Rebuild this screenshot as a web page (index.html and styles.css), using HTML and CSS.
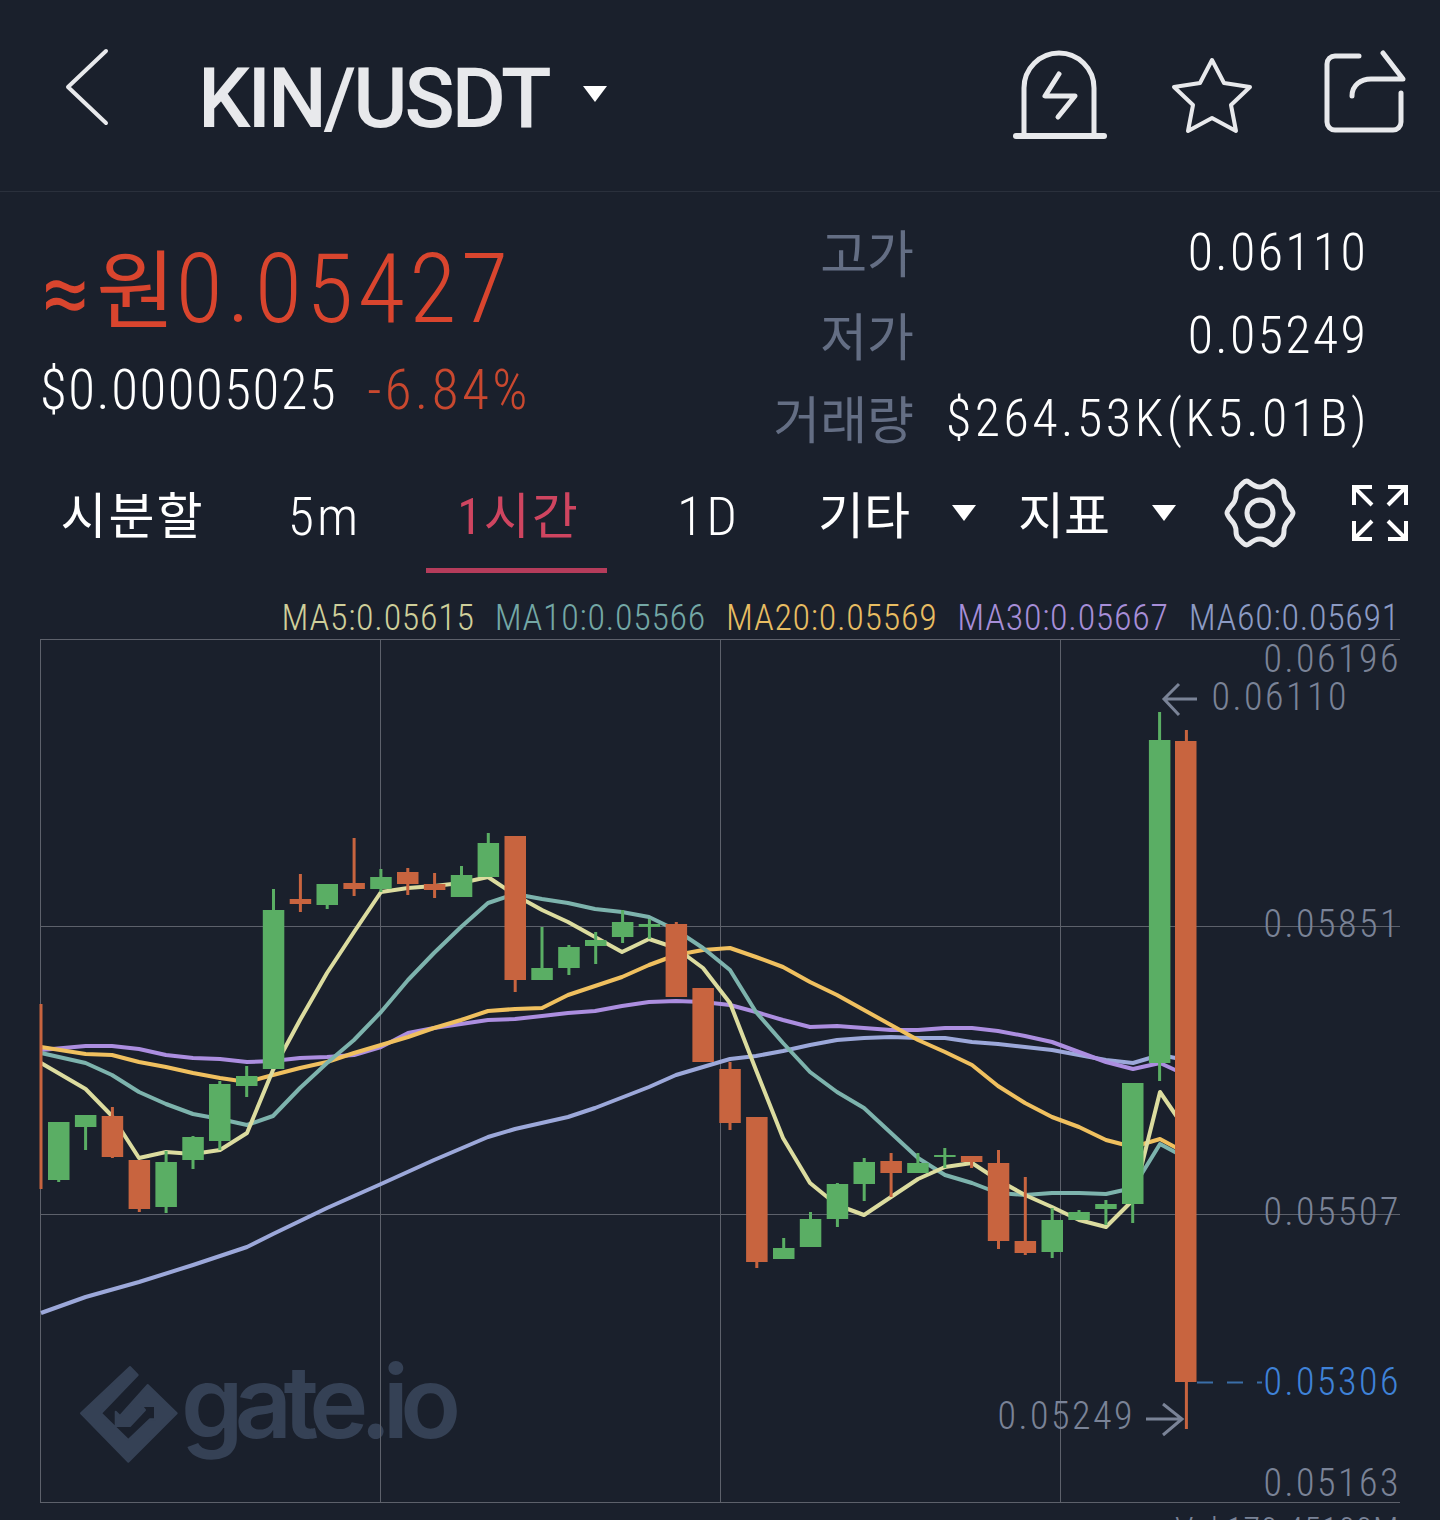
FILE: index.html
```html
<!DOCTYPE html>
<html lang="ko">
<head>
  <meta charset="UTF-8">
  <title>KIN/USDT</title>
  <link rel="stylesheet" href="styles.css">
</head>
<body>
  <header class="topbar">
    <svg class="back-icon" width="44" height="78" viewBox="0 0 44 78"><path d="M41 3L3 39L41 75"/></svg>
    <h1 class="pair">KIN/USDT</h1>
    <span class="caret pair-caret"></span>
    <div class="topbar-actions">
      <svg class="icon" width="94" height="90" viewBox="1013 49 94 90">
        <path d="M1024 133V87a35 35 0 0 1 70 0V133"/>
        <path class="thick" d="M1016 135H1104"/>
        <path d="M1059 73L1045 95H1075L1058 116"/>
      </svg>
      <svg class="icon star" width="84" height="80" viewBox="1170 55 84 80">
        <path d="M1212 60L1224 83L1250 87L1231 105L1236 131L1212 118L1188 131L1193 105L1174 87L1200 83Z"/>
      </svg>
      <svg class="icon share" width="86" height="84" viewBox="1323 50 86 84">
        <path d="M1360 56H1336a8 8 0 0 0-8 8V122a8 8 0 0 0 8 8H1394a8 8 0 0 0 8-8V93"/>
        <path d="M1353 96C1353 85 1362 79 1372 79H1404L1384 53"/>
      </svg>
    </div>
  </header>

  <section class="summary">
    <div class="price-block">
      <div class="price"><span class="approx">≈</span><span class="price-unit">원</span>0.05427</div>
      <div class="price-sub">$0.00005025<span class="change">-6.84%</span></div>
    </div>
    <dl class="stats">
      <dt>고가</dt><dd>0.06110</dd>
      <dt>저가</dt><dd>0.05249</dd>
      <dt>거래량</dt><dd class="volume">$264.53K(K5.01B)</dd>
    </dl>
  </section>

  <nav class="tabs">
    <a class="tab">시분할</a>
    <a class="tab latin">5m</a>
    <a class="tab active">1시간</a>
    <a class="tab latin">1D</a>
    <a class="tab-menu first">기타<span class="caret"></span></a>
    <a class="tab-menu">지표<span class="caret"></span></a>
    <svg class="icon gear" width="76" height="72" viewBox="-38 -36 76 72">
      <path d="M0 -26Q5 -26 11 -31Q14 -33 17 -30L22 -25Q24 -23 24 -18Q24 -12 29 -7Q33 -2 33 0Q33 2 29 7Q24 12 24 18Q24 23 22 25L17 30Q14 33 11 31Q5 26 0 26Q-5 26 -11 31Q-14 33 -17 30L-22 25Q-24 23 -24 18Q-24 12 -29 7Q-33 2 -33 0Q-33 -2 -29 -7Q-24 -12 -24 -18Q-24 -23 -22 -25L-17 -30Q-14 -33 -11 -31Q-5 -26 0 -26Z"/>
      <circle r="13"/>
    </svg>
    <svg class="icon expand" width="58" height="56" viewBox="1352 485 58 56">
      <path d="M1372 487H1354V505M1354 487L1372 505"/>
      <path d="M1388 487H1406V505M1406 487L1388 505"/>
      <path d="M1372 539H1354V521M1354 539L1372 521"/>
      <path d="M1388 539H1406V521M1406 539L1388 521"/>
    </svg>
  </nav>

  <div class="legend">
    <span class="ma5">MA5:0.05615</span>
    <span class="ma10">MA10:0.05566</span>
    <span class="ma20">MA20:0.05569</span>
    <span class="ma30">MA30:0.05667</span>
    <span class="ma60">MA60:0.05691</span>
  </div>

  <svg class="chart" width="1440" height="881" viewBox="0 639 1440 881">
    <!-- watermark -->
    <g class="logo">
      <path class="logo-mark" d="M130 1367L137.7 1375L101 1413.3L128.3 1440L150 1419.3H155V1406H141.7L145 1410L130 1426H115.7V1411.7L120 1416L147.7 1385L176.7 1413.3L128.3 1461.7L81 1413.3Z"/>
      <text class="logo-text" x="181" y="1438">gate.io</text>
    </g>

    <!-- grid -->
    <path class="grid" d="M40.5 639V1502M380.5 639V1502M720.5 639V1502M1060.5 639V1502M40 639.5H1400M40 926.5H1400M40 1214.5H1400M40 1502.5H1400"/>

    <!-- moving averages -->
    <polyline class="line ma60" points="41,1313 85.6,1297 139,1282 193,1265 247,1247 273,1234 300,1221 327,1208 354,1196 381,1184 434,1160 488,1137 515,1129 568,1117 595,1108 649,1087 676,1075 703,1067 730,1059 756,1056 783,1051 810,1045 837,1040 864,1038 891,1037 918,1038 945,1038 972,1042 998,1044 1025,1047 1052,1050 1079,1055 1106,1060 1133,1063 1160,1055 1186,1060"/>
    <polyline class="line ma30" points="41,1050 85.6,1046 112,1046 139,1049 166,1055 193,1058 220,1059 247,1062 273,1061 300,1058 327,1057 354,1055 381,1047 408,1033 434,1028 461,1024 488,1020 515,1019 542,1016 568,1013 595,1011 622,1006 649,1002 676,1001 703,1002 730,1005 756,1012 783,1020 810,1027 837,1026 864,1028 891,1030 918,1030 945,1028 972,1028 998,1031 1025,1036 1052,1042 1079,1052 1106,1062 1133,1069 1160,1063 1186,1075"/>
    <polyline class="line ma20" points="41,1047 85.6,1054 112,1055 139,1062 166,1067 193,1073 220,1078 247,1082 273,1075 300,1068 327,1062 354,1053 381,1045 408,1037 434,1028 461,1020 488,1011 515,1009 542,1008 568,995 595,986 622,977 649,965 676,955 703,950 730,948 756,957 783,967 810,982 837,995 864,1010 891,1025 918,1040 945,1052 972,1065 998,1086 1025,1103 1052,1117 1079,1127 1106,1140 1133,1147 1160,1139 1186,1153"/>
    <polyline class="line ma10" points="41,1053 85.6,1063 112,1075 139,1092 166,1104 193,1114 220,1119 247,1125 273,1116 300,1088 327,1063 354,1040 381,1012 408,980 434,953 461,927 488,903 515,894 542,899 568,903 595,909 622,912 649,917 676,930 703,948 730,970 756,1012 783,1043 810,1072 837,1092 864,1108 891,1133 918,1158 945,1175 972,1183 998,1193 1025,1195 1052,1193 1079,1193 1106,1194 1133,1188 1160,1144 1186,1158"/>
    <polyline class="line ma5" points="41,1063 85.6,1089 112,1116 139,1158 166,1152 193,1154 220,1150 247,1133 273,1070 300,1020 327,973 354,932 381,892 408,888 434,886 461,883 488,877 515,895 542,910 568,922 595,937 622,952 649,939 676,948 703,968 730,1003 756,1070 783,1138 810,1183 837,1205 864,1215 891,1197 918,1179 945,1167 972,1163 998,1180 1025,1195 1052,1207 1079,1220 1106,1227 1133,1200 1160,1092 1186,1130"/>

    <!-- candles -->
    <g class="down">
      <path d="M41 1004V1189M112.4 1107V1158M139.3 1160V1212M300.4 874V912M354.1 838V896M407.8 868V895M434.6 873V898M515.2 836V992M676.3 922V997M703.1 988V1062M730 1062V1130M756.8 1117V1268M891.1 1153V1197M971.6 1156V1168M998.5 1150V1249M1025.3 1177V1255M1186.4 730V1429"/>
      <rect x="101.7" y="1116" width="21.5" height="41"/>
      <rect x="128.6" y="1160" width="21.5" height="49"/>
      <rect x="289.7" y="899" width="21.5" height="5"/>
      <rect x="343.4" y="883" width="21.5" height="6"/>
      <rect x="397" y="872" width="21.5" height="12"/>
      <rect x="423.9" y="884" width="21.5" height="6"/>
      <rect x="504.5" y="836" width="21.5" height="144"/>
      <rect x="665.6" y="924" width="21.5" height="73"/>
      <rect x="692.4" y="988" width="21.5" height="74"/>
      <rect x="719.3" y="1069" width="21.5" height="54"/>
      <rect x="746.1" y="1117" width="21.5" height="145"/>
      <rect x="880.4" y="1161" width="21.5" height="12"/>
      <rect x="960.9" y="1156" width="21.5" height="6"/>
      <rect x="987.8" y="1163" width="21.5" height="78"/>
      <rect x="1014.6" y="1241" width="21.5" height="12"/>
      <rect x="1175" y="741" width="21.5" height="641"/>
    </g>
    <g class="up">
      <path d="M58.7 1122V1182M85.6 1115V1150M166.1 1151V1213M193 1136V1169M219.8 1081V1150M246.7 1066V1097M273.5 889V1069M327.2 884V909M380.9 869V892M461.5 866V897M488.3 833V877M542 927V980M568.9 945V975M595.7 932V964M622.6 910V943M649.4 919V939M783.7 1238V1259M810.5 1212V1247M837.4 1183V1227M864.2 1158V1201M917.9 1153V1173M944.8 1148V1168M1052.2 1208V1258M1079 1210V1220M1105.9 1200V1225M1132.7 1083V1223M1159.6 712V1081"/>
      <rect x="48" y="1122" width="21.5" height="58"/>
      <rect x="74.9" y="1115" width="21.5" height="12"/>
      <rect x="155.4" y="1162" width="21.5" height="45"/>
      <rect x="182.3" y="1137" width="21.5" height="23"/>
      <rect x="209" y="1084" width="21.5" height="57"/>
      <rect x="236" y="1076" width="21.5" height="10"/>
      <rect x="262.8" y="910" width="21.5" height="159"/>
      <rect x="316.5" y="884" width="21.5" height="21"/>
      <rect x="370.2" y="877" width="21.5" height="12"/>
      <rect x="450.8" y="875" width="21.5" height="22"/>
      <rect x="477.6" y="843" width="21.5" height="34"/>
      <rect x="531.3" y="968" width="21.5" height="12"/>
      <rect x="558.2" y="947" width="21.5" height="21"/>
      <rect x="585" y="940" width="21.5" height="6"/>
      <rect x="611.9" y="922" width="21.5" height="15"/>
      <rect x="638.7" y="924" width="21.5" height="3"/>
      <rect x="773" y="1248" width="21.5" height="11"/>
      <rect x="799.8" y="1219" width="21.5" height="28"/>
      <rect x="826.7" y="1184" width="21.5" height="35"/>
      <rect x="853.5" y="1162" width="21.5" height="22"/>
      <rect x="907.2" y="1163" width="21.5" height="10"/>
      <rect x="934.1" y="1155" width="21.5" height="2"/>
      <rect x="1041.5" y="1220" width="21.5" height="32"/>
      <rect x="1068.3" y="1212" width="21.5" height="8"/>
      <rect x="1095.2" y="1204" width="21.5" height="5"/>
      <rect x="1122" y="1083" width="21.5" height="121"/>
      <rect x="1148.9" y="740" width="21.5" height="323"/>
    </g>

    <!-- price axis -->
    <path class="last-dash" d="M1197 1382.5H1262"/>
    <text class="axis" x="1401" y="672">0.06196</text>
    <text class="axis" x="1401" y="937">0.05851</text>
    <text class="axis" x="1401" y="1225">0.05507</text>
    <text class="axis last" x="1401" y="1395">0.05306</text>
    <text class="axis" x="1401" y="1496">0.05163</text>
    <text class="axis" x="1349" y="710">0.06110</text>
    <text class="axis" x="1135" y="1429">0.05249</text>
    <path class="pointer" d="M1197 699H1164M1179 684L1164 699L1179 715"/>
    <path class="pointer" d="M1146 1419H1182M1163 1404L1182 1419L1163 1435"/>
    <text class="axis vol" x="1399" y="1541">Vol:170.45100M</text>
  </svg>
</body>
</html>
```

FILE: styles.css
```css
html, body {
  margin: 0;
  padding: 0;
}
body {
  width: 1440px;
  height: 1520px;
  overflow: hidden;
  background-color: #1a202c;
  color: #fff;
  font-family: Roboto, "Noto Sans CJK KR", sans-serif;
  font-weight: 300;
  font-stretch: 85%;
}

/* top bar */
.topbar {
  display: flex;
  align-items: center;
  height: 191px;
  border-bottom: 1px solid #2a303c;
  padding: 0 32px 0 65px;
}
.back-icon {
  margin-top: -18px;
  fill: none;
  stroke: #e8e9ec;
  stroke-width: 4;
  stroke-linecap: round;
  stroke-linejoin: round;
}
.pair {
  margin: 6px 0 0 89px;
  font-size: 83px;
  font-weight: 500;
  font-stretch: 90%;
  letter-spacing: -3px;
  color: #e8e9ec;
}
.caret {
  display: inline-block;
  width: 0;
  height: 0;
  border-left: 12px solid transparent;
  border-right: 12px solid transparent;
  border-top: 16px solid #fff;
}
.pair-caret {
  margin: -4px 0 0 34px;
}
.topbar-actions {
  display: flex;
  align-items: center;
  gap: 63px;
  margin-left: auto;
  margin-top: -2px;
}
.icon {
  fill: none;
  stroke: #e8e9ec;
  stroke-width: 5;
  stroke-linecap: round;
  stroke-linejoin: round;
}
.icon .thick {
  stroke-width: 6;
}
.star {
  stroke-width: 4;
  margin-right: 5px;
}
.share {
  margin-top: -6px;
}

/* price summary */
.summary {
  display: flex;
  justify-content: space-between;
  height: 268px;
  padding: 19px 74px 0 42px;
  box-sizing: border-box;
}
.price {
  margin-top: 20px;
  font-size: 97px;
  line-height: 108px;
  letter-spacing: 4.4px;
  color: #d9452e;
}
.approx {
  font-size: 84px;
  font-weight: 400;
  font-stretch: 100%;
  letter-spacing: 0;
}
.price-unit {
  font-family: "Noto Sans CJK KR", sans-serif;
  font-size: 86px;
  font-weight: 400;
  letter-spacing: 0;
  margin-left: 7px;
}
.price-sub {
  margin-top: 10px;
  margin-left: -2px;
  font-size: 55px;
  line-height: 64px;
  letter-spacing: 1.5px;
}
.change {
  margin-left: 30px;
  color: #c9482f;
  letter-spacing: 3.5px;
}
.stats {
  display: grid;
  grid-template-columns: auto 452px;
  grid-auto-rows: 83px;
  align-items: center;
  margin: 0;
  font-size: 52px;
  letter-spacing: 2.3px;
}
.stats dt {
  padding-bottom: 4px;
  text-align: right;
  color: #646e84;
  font-size: 51px;
  font-weight: 400;
  letter-spacing: 0;
}
.stats dd {
  margin: 0 -2px 0 0;
  text-align: right;
}
.stats .volume {
  margin-right: -4px;
  letter-spacing: 3.5px;
}

/* interval tabs */
.tabs {
  display: flex;
  align-items: flex-start;
  height: 113px;
  padding-left: 42px;
  font-size: 50px;
  font-weight: 400;
}
.tab {
  box-sizing: border-box;
  width: 181px;
  height: 113px;
  margin-right: 11px;
  padding-top: 7px;
  line-height: 100px;
  text-align: center;
  letter-spacing: 2px;
  border-bottom: 5px solid transparent;
}
.tab.latin {
  font-size: 54px;
  font-weight: 300;
  letter-spacing: 3px;
}
.tab.active {
  color: #cf4560;
  text-indent: 4px;
  border-bottom-color: #b53c5b;
}
.tab-menu {
  display: flex;
  align-items: center;
  gap: 42px;
  height: 100px;
  margin: 7px 42px 0 0;
  line-height: 100px;
}
.tab-menu.first {
  margin-left: 8px;
}
.tab-menu .caret {
  margin-top: -8px;
}
.gear {
  margin: 17px 0 0 4px;
}
.expand {
  margin: 25px 0 0 54px;
  stroke: #fff;
  stroke-width: 4;
  stroke-linecap: butt;
  stroke-linejoin: miter;
}

/* moving average legend */
.legend {
  display: flex;
  justify-content: flex-end;
  align-items: center;
  gap: 20px;
  box-sizing: border-box;
  height: 66px;
  padding: 24px 40px 0 0;
  font-size: 36px;
  letter-spacing: 0.7px;
}
.legend .ma5 { color: #cfcf9a; }
.legend .ma10 { color: #74a8a6; }
.legend .ma20 { color: #e8bd62; }
.legend .ma30 { color: #a78ed8; }
.legend .ma60 { color: #8c9bc4; }

/* chart */
.chart {
  display: block;
}
.grid {
  fill: none;
  stroke: #5d616b;
  stroke-width: 1;
}
.line {
  fill: none;
  stroke-width: 4;
  stroke-linejoin: round;
}
.line.ma5 { stroke: #dcdc9f; }
.line.ma10 { stroke: #7db3ad; }
.line.ma20 { stroke: #f0c05f; }
.line.ma30 { stroke: #ac8ee0; }
.line.ma60 { stroke: #9ca8da; }
.up rect { fill: #5aae64; }
.up path { stroke: #5aae64; stroke-width: 3; }
.down rect { fill: #c8643f; }
.down path { stroke: #c8643f; stroke-width: 3; }
.axis {
  font-size: 38px;
  letter-spacing: 2.5px;
  text-anchor: end;
  fill: #7a8397;
}
.axis.last {
  fill: #3f82d8;
}
.axis.vol {
  font-size: 34px;
  letter-spacing: 0.7px;
}
.last-dash {
  stroke: #3a6ea8;
  stroke-width: 2;
  stroke-dasharray: 16 14;
}
.pointer {
  fill: none;
  stroke: #7a8397;
  stroke-width: 3;
}
.logo-mark {
  fill: #354155;
  stroke: #354155;
  stroke-width: 2;
  stroke-linejoin: round;
}
.logo-text {
  font-family: Inter, sans-serif;
  font-size: 100px;
  font-weight: 600;
  font-stretch: normal;
  letter-spacing: -8.7px;
  fill: #354155;
}
```
